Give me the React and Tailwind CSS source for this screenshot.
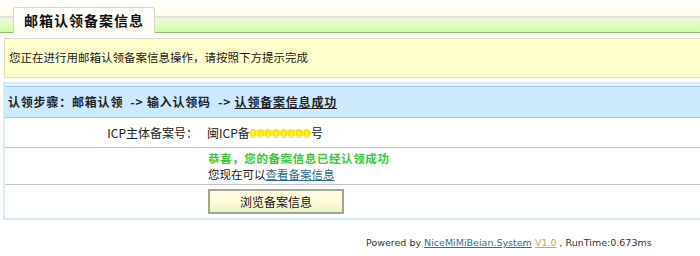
import React from 'react';

const cjk = '"Noto Sans CJK SC", "Liberation Sans", sans-serif';

const App = () => {
  return (
    <div
      className="w-[700px] h-[256px] overflow-hidden bg-white text-[12px] text-[#222]"
      style={{ fontFamily: cjk }}
    >
      {/* Tab header */}
      <div className="relative h-[33px]">
        <div className="h-[16px] bg-gradient-to-b from-white to-[#fffbe4]" />
        <div className="h-[2px] bg-[#e4e2cc]" />
        <div className="h-[14px] bg-gradient-to-b from-[#eef7e2] to-[#ccff99]" />
        <div className="h-[1px] bg-[#95b875]" />
        <div className="absolute left-[13px] top-[7px] flex h-[26px] w-[142px] items-center justify-center rounded-t-[3px] border border-b-0 border-[#d6d6c4] bg-gradient-to-b from-white to-[#fffdf2]">
          <span className="text-[14px] font-bold tracking-[1px] text-[#111]">邮箱认领备案信息</span>
        </div>
      </div>

      {/* Notice */}
      <div className="ml-[4px] mt-[5px] flex h-[40px] items-center border-y border-l border-[#dcdac0] bg-[#ffffcc] pl-[4px] text-[11.5px]">
        您正在进行用邮箱认领备案信息操作，请按照下方提示完成
      </div>

      {/* Steps box */}
      <div className="ml-[3px] mt-[4px] border-2 border-r-0 border-[#d4eaf6]">
        <div className="border-t-2 border-[#e6f3fb]">
          <div className="flex h-[32px] items-center border-y border-[#a3c9df] bg-[#cde9fd] pl-[3px] font-bold tracking-[0.8px]">
            认领步骤：邮箱认领&nbsp; -&gt; 输入认领码&nbsp; -&gt;&nbsp;<span className="underline">认领备案信息成功</span>
          </div>

          <div className="flex h-[30px] items-center border-b border-[#c6c6c6]">
            <div className="w-[193px] text-right">ICP主体备案号：</div>
            <div className="ml-[9px] flex items-center">
              闽ICP备
              <span className="relative inline-flex items-center">
                <span className="absolute left-0 right-0 top-[6px] h-[6px] rounded-full bg-[#ffee33]" />
                <span className="relative tracking-[1px] text-[#f0d800]">00000000</span>
              </span>
              号
            </div>
          </div>

          <div className="flex h-[37px] items-center border-b border-[#c6c6c6]">
            <div className="ml-[203px] flex flex-col text-[11.5px] leading-[16px]">
              <div className="font-bold tracking-[0.6px] text-[#33cc33]">恭喜，您的备案信息已经认领成功</div>
              <div>
                您现在可以<a href="#" className="text-[#2a6c8f] underline">查看备案信息</a>
              </div>
            </div>
          </div>

          <div className="flex h-[33px] items-center">
            <button
              type="button"
              className="ml-[203px] flex h-[25px] w-[136px] items-center justify-center border-2 border-[#a5a58c] bg-gradient-to-b from-[#fffbe6] via-[#fffbd8] to-[#e4f3c8] text-[12px] text-[#111]"
            >
              浏览备案信息
            </button>
          </div>
        </div>
      </div>

      {/* Footer */}
      <div
        className="mt-[16px] pl-[366px] text-[9.5px] text-[#333]"
        style={{ fontFamily: '"DejaVu Sans", Verdana, sans-serif' }}
      >
        Powered by <a href="#" className="text-[#3a6f8f] underline">NiceMiMiBeian.System</a>{' '}
        <a href="#" className="text-[#e8a040] underline">V1.0</a> , RunTime:0.673ms
      </div>
    </div>
  );
};

export default App;
